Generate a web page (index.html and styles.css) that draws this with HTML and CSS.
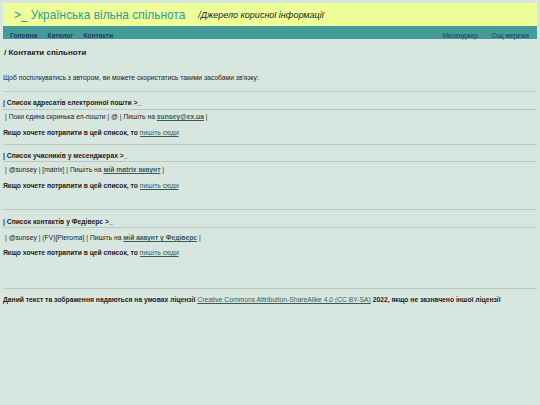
FILE: index.html
```html
<!DOCTYPE html>
<html lang="uk">
<head>
<meta charset="utf-8">
<title>Контакти спільноти</title>
<link rel="stylesheet" href="styles.css">
</head>
<body>
<header class="site-header">
  <div class="brand">
    <span class="brand-title">&gt;_ Українська вільна спільнота</span>
    <span class="brand-sub">/Джерело корисної інформації</span>
  </div>
  <nav class="nav">
    <div class="nav-left">
      <a href="#">Головна</a>
      <a href="#">Каталог</a>
      <a href="#">Контакти</a>
    </div>
    <div class="nav-right">
      <a href="#">Месенджер</a>
      <a href="#">Соц мережа</a>
    </div>
  </nav>
</header>
<main class="content">
  <h2 class="page-title">/ Контакти спільноти</h2>
  <p class="intro">Щоб поспілкуватись з автором, ви можете скористатись такими засобами зв'язку:</p>
  <hr class="rule r1">
  <h3 class="section-title">| Список адресатів електронної пошти &gt;_</h3>
  <hr class="rule r2">
  <p class="line l1">| Поки єдина скринька ел-пошти | @ | Пишіть на <a class="strong-link" href="#">sunsey@ex.ua</a> |</p>
  <p class="cta c1">Якщо хочете потрапити в цей список, то <a href="#">пишіть сюди</a></p>
  <hr class="rule r3">
  <h3 class="section-title">| Список учасників у месенджерах &gt;_</h3>
  <hr class="rule r4">
  <p class="line l2">| @sunsey | [matrix] | Пишіть на <a class="strong-link" href="#">мій matrix акаунт</a> |</p>
  <p class="cta c2">Якщо хочете потрапити в цей список, то <a href="#">пишіть сюди</a></p>
  <hr class="rule r5">
  <h3 class="section-title s3">| Список контактів у Федіверс &gt;_</h3>
  <hr class="rule r6">
  <p class="line l3">| @sunsey | (FV)[Pleroma] | Пишіть на <a class="strong-link" href="#">мій акаунт у Федіверс</a> |</p>
  <p class="cta c3">Якщо хочете потрапити в цей список, то <a href="#">пишіть сюди</a></p>
  <hr class="rule r7">
  <p class="footer">Даний текст та зображення надаються на умовах ліцензії <a href="#">Creative Commons Attribution-ShareAlike 4.0 (CC BY-SA)</a> 2022, якщо не зазначено іншої ліцензії</p>
</main>
</body>
</html>
```
FILE: styles.css
```css
html, body {
  margin: 0;
  padding: 0;
}
body {
  background: #d8e6e0;
  font-family: "Liberation Sans", Arial, sans-serif;
  color: #222;
  width: 540px;
  height: 405px;
  padding: 3px 3px 0 3px;
  box-sizing: border-box;
}
.site-header {
  display: flex;
  flex-direction: column;
}
.brand {
  background: #eeff99;
  height: 23px;
  display: flex;
  align-items: center;
  padding-left: 11px;
  box-sizing: border-box;
}
.brand-title {
  font-size: 11.9px;
  color: #2f9a9a;
  margin-right: 13px;
}
.brand-sub {
  font-size: 9px;
  font-style: italic;
  color: #222;
}
.nav {
  background: #449b97;
  height: 13px;
  display: flex;
  justify-content: space-between;
  align-items: center;
  padding: 0 8px 0 7px;
}
.nav a {
  font-size: 6.6px;
  color: #1c3d6b;
  text-decoration: none;
  margin-right: 6px;
}
.nav-left a {
  font-weight: bold;
}
.nav-right a {
  margin-right: 0;
  margin-left: 9px;
}
.content {
  display: flex;
  flex-direction: column;
}
.page-title {
  font-size: 8px;
  line-height: 10px;
  font-weight: bold;
  margin: 9px 0 0 1px;
}
.intro, .section-title, .line, .cta, .footer {
  font-size: 6.75px;
  line-height: 8px;
  margin: 0;
}
.intro { margin-top: 16px; }
.rule {
  border: 0;
  border-top: 1px solid #b8c8c0;
  margin: 0;
  width: 100%;
}
.section-title {
  font-weight: bold;
  margin-top: 7px;
}
.section-title.s3 { margin-top: 8px; }
.line { margin-left: 2px; }
.cta { font-weight: bold; }
.cta a, .footer a, .line a {
  color: #3a5a58;
}
.cta a, .footer a { font-weight: normal; }
.strong-link { font-weight: bold; }
.footer { font-weight: bold; margin-top: 7px; }

.r1 { margin-top: 9px; }
.r2 { margin-top: 2px; }
.l1 { margin-top: 3px; }
.c1 { margin-top: 8px; }
.r3 { margin-top: 7px; }
.r4 { margin-top: 1px; }
.l2 { margin-top: 4px; }
.c2 { margin-top: 8px; }
.r5 { margin-top: 19px; }
.r6 { margin-top: 1px; }
.l3 { margin-top: 6px; }
.c3 { margin-top: 7px; }
.r7 { margin-top: 31px; }
```
